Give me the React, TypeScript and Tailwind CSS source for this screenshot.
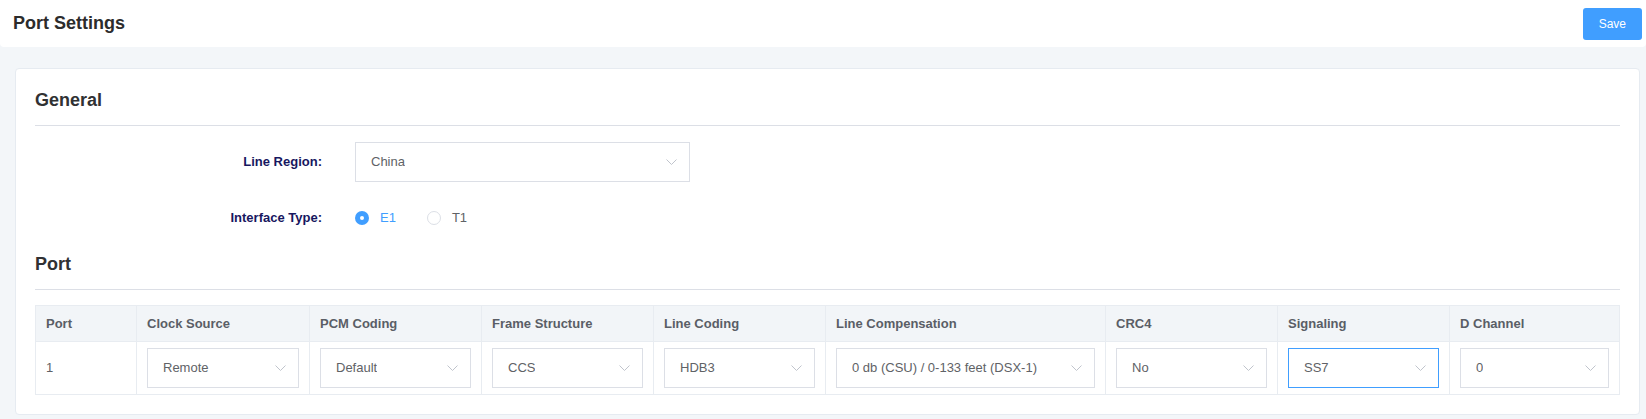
import React from 'react';

const font = { fontFamily: '"Liberation Sans", Arial, sans-serif' };

function Chevron() {
  return (
    <svg width="11" height="6" viewBox="0 0 11 6" fill="none" className="shrink-0">
      <polyline points="0.5,0.5 5.5,5.5 10.5,0.5" stroke="#c0c4cc" strokeWidth="1" />
    </svg>
  );
}

interface SelectProps {
  value: string;
  focused?: boolean;
  className?: string;
}

function Select({ value, focused, className = '' }: SelectProps) {
  return (
    <div
      className={`flex items-center justify-between h-[40px] pl-[15px] pr-[12px] bg-white border text-[13px] text-[#606266] ${
        focused ? 'border-[#409eff]' : 'border-[#dcdfe6]'
      } ${className}`}
    >
      <span className="truncate">{value}</span>
      <Chevron />
    </div>
  );
}

function Radio({ label, checked }: { label: string; checked?: boolean }) {
  return (
    <label className="flex items-center mr-[31px]">
      {checked ? (
        <span className="w-[14px] h-[14px] rounded-full bg-[#409eff] flex items-center justify-center">
          <span className="w-[4px] h-[4px] rounded-full bg-white" />
        </span>
      ) : (
        <span className="w-[14px] h-[14px] rounded-full border border-[#dcdfe6] bg-white" />
      )}
      <span className={`ml-[11px] text-[13px] ${checked ? 'text-[#409eff]' : 'text-[#606266]'}`}>{label}</span>
    </label>
  );
}

const columns = [
  { title: 'Port' },
  { title: 'Clock Source', value: 'Remote' },
  { title: 'PCM Coding', value: 'Default' },
  { title: 'Frame Structure', value: 'CCS' },
  { title: 'Line Coding', value: 'HDB3' },
  { title: 'Line Compensation', value: '0 db (CSU) / 0-133 feet (DSX-1)' },
  { title: 'CRC4', value: 'No' },
  { title: 'Signaling', value: 'SS7', focused: true },
  { title: 'D Channel', value: '0' },
];

export default function App() {
  return (
    <div className="w-[1646px] h-[419px] bg-[#f3f6f9] overflow-hidden" style={font}>
      {/* Top bar */}
      <div className="flex items-center justify-between h-[47px] bg-white pl-[13px] pr-[4px] rounded-b-[4px]">
        <h1 className="text-[18px] font-bold text-[#2c2c2c]">Port Settings</h1>
        <button className="h-[32px] px-[16px] bg-[#409eff] text-white text-[12px] rounded-[3px]">Save</button>
      </div>

      {/* Card */}
      <div className="mt-[21px] ml-[15px] w-[1625px] bg-white border border-[#e6ebf1] rounded-[4px] px-[19px] pt-[19px] pb-[19px]">
        <h2 className="text-[18px] leading-[24px] font-bold text-[#303133] pb-[13px] border-b border-[#dcdfe6]">General</h2>

        <div className="mt-[16px] flex items-center h-[40px]">
          <div className="w-[287px] text-right text-[13px] font-bold text-[#171760]">Line Region:</div>
          <Select value="China" className="ml-[33px] w-[335px]" />
        </div>

        <div className="mt-[16px] flex items-center h-[40px]">
          <div className="w-[287px] text-right text-[13px] font-bold text-[#171760]">Interface Type:</div>
          <div className="ml-[33px] flex items-center">
            <Radio label="E1" checked />
            <Radio label="T1" />
          </div>
        </div>

        <h2 className="mt-[14px] text-[18px] leading-[24px] font-bold text-[#303133] pb-[13px] border-b border-[#dcdfe6]">Port</h2>

        <div className="mt-[15px] border border-[#e8ecf1] grid grid-cols-[100px_173px_172px_172px_172px_280px_172px_172px_1fr]">
          {columns.map((c, i) => (
            <div
              key={c.title}
              className={`h-[36px] flex items-center px-[10px] bg-[#f2f5f8] border-b border-[#e8ecf1] text-[13px] font-bold text-[#5a5e66] ${
                i > 0 ? 'border-l' : ''
              }`}
            >
              {c.title}
            </div>
          ))}
          {columns.map((c, i) => (
            <div
              key={c.title + '-cell'}
              className={`h-[52px] flex items-center px-[10px] border-[#e8ecf1] text-[13px] text-[#606266] ${
                i > 0 ? 'border-l' : ''
              }`}
            >
              {i === 0 ? '1' : <Select value={c.value ?? ''} focused={c.focused} className="w-full" />}
            </div>
          ))}
        </div>
      </div>
    </div>
  );
}
